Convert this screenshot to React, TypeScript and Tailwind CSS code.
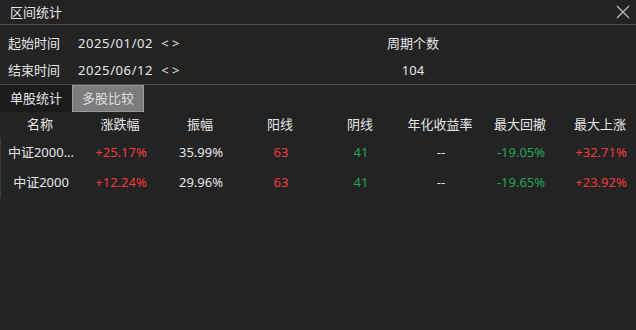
import React from 'react';

const FONT = { fontFamily: '"Noto Sans", "Noto Sans CJK SC", sans-serif' };

const cols = ['名称', '涨跌幅', '振幅', '阳线', '阴线', '年化收益率', '最大回撤', '最大上涨'];

const rows = [
    { name: '中证2000...', chg: '+25.17%', amp: '35.99%', up: '63', down: '41', annual: '--', dd: '-19.05%', rise: '+32.71%' },
    { name: '中证2000', chg: '+12.24%', amp: '29.96%', up: '63', down: '41', annual: '--', dd: '-19.65%', rise: '+23.92%' },
];

export default function App() {
    return (
        <div className="w-[636px] h-[330px] bg-[#232323] text-[#e6e6e6] text-[13px] overflow-hidden" style={FONT}>
            {/* title bar */}
            <div className="h-[25px] flex items-center justify-between pl-[10px] pr-[6px] border-b border-[#4a4a4a]">
                <span className="leading-none">区间统计</span>
                <svg width="14" height="14" viewBox="0 0 14 14" className="text-[#b8b8b8]">
                    <path d="M1 1 L13 13 M13 1 L1 13" stroke="currentColor" strokeWidth="1.4" />
                </svg>
            </div>

            {/* dates */}
            <div className="h-[60px] flex border-b border-[#4a4a4a] pl-[8px] pt-[5px]">
                <div className="w-[355px] flex flex-col">
                    <div className="h-[28px] flex items-center">
                        <span className="w-[70px]">起始时间</span>
                        <span className="tracking-[0.6px]">2025/01/02</span>
                        <span className="ml-[8px]">&lt;&nbsp;&gt;</span>
                    </div>
                    <div className="h-[28px] flex items-center">
                        <span className="w-[70px]">结束时间</span>
                        <span className="tracking-[0.6px]">2025/06/12</span>
                        <span className="ml-[8px]">&lt;&nbsp;&gt;</span>
                    </div>
                </div>
                <div className="w-[100px] flex flex-col items-center">
                    <div className="h-[28px] flex items-center">周期个数</div>
                    <div className="h-[28px] flex items-center">104</div>
                </div>
            </div>

            {/* tabs */}
            <div className="h-[27px] flex">
                <div className="w-[72px] bg-[#1b1b1b] flex items-center justify-center">单股统计</div>
                <div className="w-[72px] bg-[#7c7c7c] border border-[#9a9a9a] text-[#dcdcdc] flex items-center justify-center">多股比较</div>
            </div>

            {/* table */}
            <div className="w-[640px]">
                <div className="grid grid-cols-[repeat(8,80px)] h-[26px] items-center">
                    {cols.map((c) => (
                        <div key={c} className="text-center">{c}</div>
                    ))}
                </div>
                <div className="border-l border-[#3a3a3a]">
                    {rows.map((r) => (
                        <div key={r.name} className="grid grid-cols-[repeat(8,80px)] h-[30px] items-center">
                            <div className="text-center">{r.name}</div>
                            <div className="text-center text-[#ee3a3a]">{r.chg}</div>
                            <div className="text-center">{r.amp}</div>
                            <div className="text-center text-[#ee3a3a]">{r.up}</div>
                            <div className="text-center text-[#23a552]">{r.down}</div>
                            <div className="text-center">{r.annual}</div>
                            <div className="text-center text-[#23a552]">{r.dd}</div>
                            <div className="text-center text-[#ee3a3a]">{r.rise}</div>
                        </div>
                    ))}
                </div>
            </div>
        </div>
    );
}
